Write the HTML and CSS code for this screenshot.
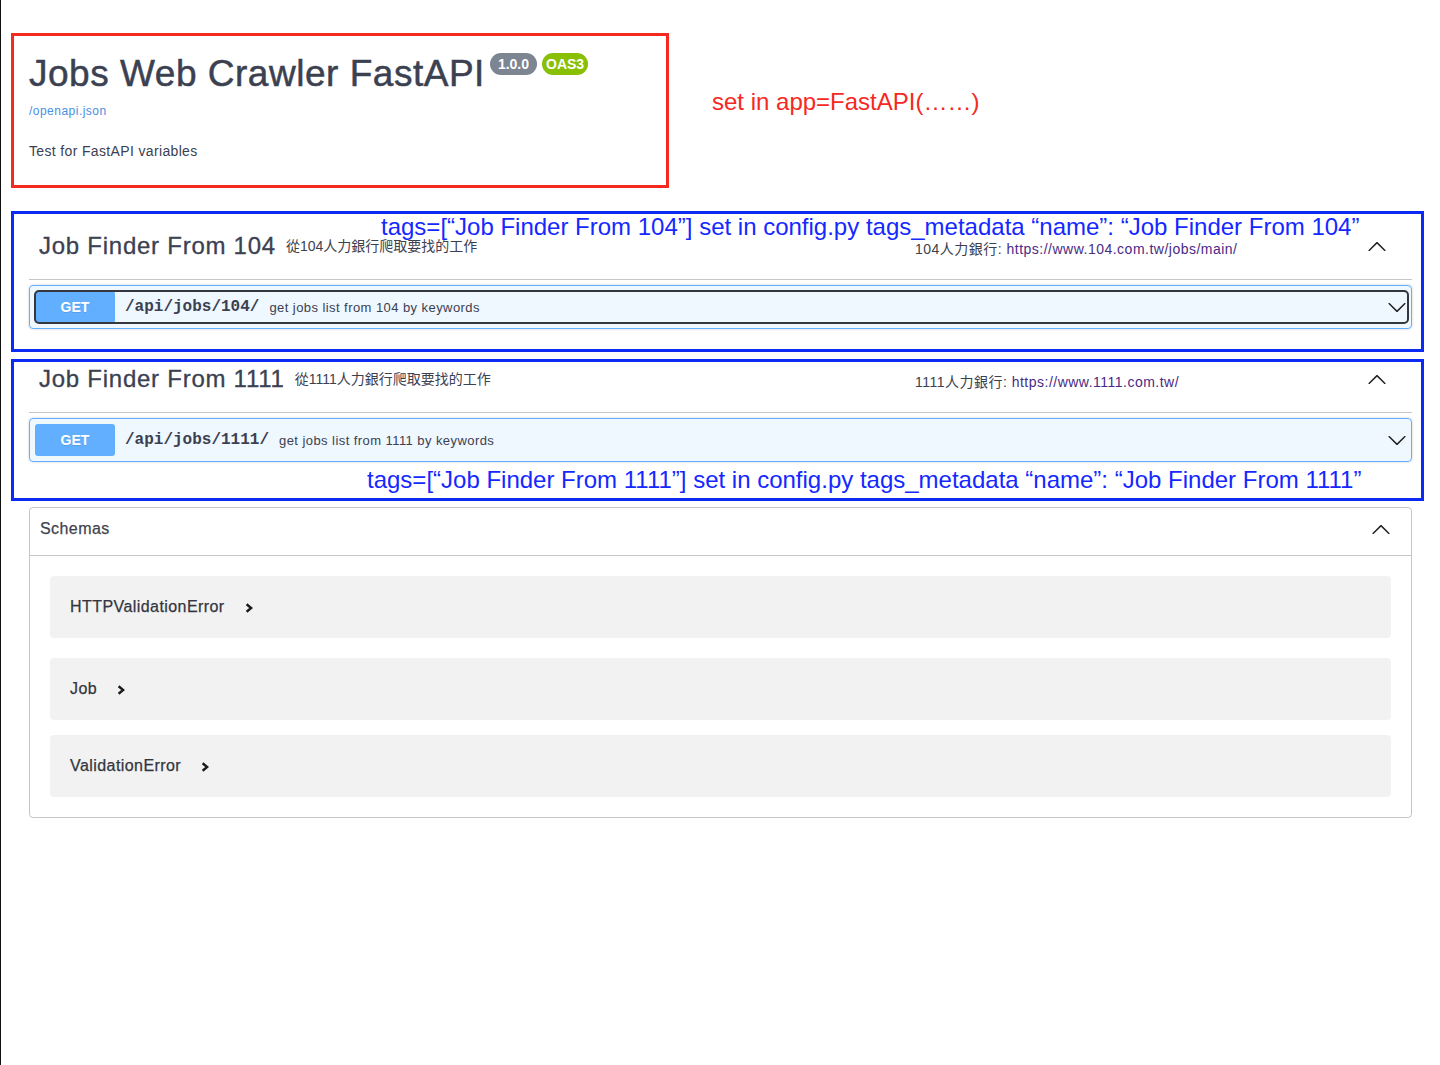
FILE: index.html
```html
<!DOCTYPE html>
<html lang="en">
<head>
<meta charset="utf-8">
<title>Jobs Web Crawler FastAPI</title>
<link rel="stylesheet" href="styles.css">
</head>
<body>
<div class="page">
  <div class="swagger">
    <section class="info">
      <div class="title-row">
        <h2 class="title">Jobs Web Crawler FastAPI</h2>
        <span class="badge badge-version">1.0.0</span>
        <span class="badge badge-oas">OAS3</span>
      </div>
      <a class="spec-link" href="#">/openapi.json</a>
      <p class="info-desc">Test for FastAPI variables</p>
    </section>

    <section class="tag-section">
      <div class="tag-header">
        <span class="tag-name">Job Finder From 104</span>
        <span class="tag-desc">從104人力銀行爬取要找的工作</span>
        <div class="tag-ext">104人力銀行: <a href="#">https://www.104.com.tw/jobs/main/</a></div>
        <svg class="arrow" viewBox="0 0 20 20" width="20" height="20"><path d="M17.418 14.908c.272.268.709.268.979 0s.271-.701 0-.969l-7.908-7.830c-.27-.268-.707-.268-.979 0l-7.908 7.830c-.27.268-.27.701 0 .969.271.268.709.268.979 0L10 7.767l7.418 7.141z"/></svg>
      </div>
      <div class="opblock">
        <div class="summary focused">
          <span class="method">GET</span>
          <span class="path">/api/jobs/104/</span>
          <span class="op-desc">get jobs list from 104 by keywords</span>
          <svg class="arrow arrow-op" viewBox="0 0 20 20" width="20" height="20"><path d="M17.418 6.109c.272-.268.709-.268.979 0s.271.701 0 .969l-7.908 7.83c-.27.268-.707.268-.979 0l-7.908-7.83c-.27-.268-.27-.701 0-.969.271-.268.709-.268.979 0L10 13.25l7.418-7.141z"/></svg>
        </div>
      </div>
    </section>

    <section class="tag-section tag-second">
      <div class="tag-header">
        <span class="tag-name">Job Finder From 1111</span>
        <span class="tag-desc">從1111人力銀行爬取要找的工作</span>
        <div class="tag-ext">1111人力銀行: <a href="#">https://www.1111.com.tw/</a></div>
        <svg class="arrow" viewBox="0 0 20 20" width="20" height="20"><path d="M17.418 14.908c.272.268.709.268.979 0s.271-.701 0-.969l-7.908-7.830c-.27-.268-.707-.268-.979 0l-7.908 7.830c-.27.268-.27.701 0 .969.271.268.709.268.979 0L10 7.767l7.418 7.141z"/></svg>
      </div>
      <div class="opblock">
        <div class="summary">
          <span class="method">GET</span>
          <span class="path">/api/jobs/1111/</span>
          <span class="op-desc">get jobs list from 1111 by keywords</span>
          <svg class="arrow arrow-op" viewBox="0 0 20 20" width="20" height="20"><path d="M17.418 6.109c.272-.268.709-.268.979 0s.271.701 0 .969l-7.908 7.83c-.27.268-.707.268-.979 0l-7.908-7.83c-.27-.268-.27-.701 0-.969.271-.268.709-.268.979 0L10 13.25l7.418-7.141z"/></svg>
        </div>
      </div>
    </section>

    <section class="models">
      <div class="models-header">
        <span class="models-title">Schemas</span>
        <svg class="arrow" viewBox="0 0 20 20" width="20" height="20"><path d="M17.418 14.908c.272.268.709.268.979 0s.271-.701 0-.969l-7.908-7.830c-.27-.268-.707-.268-.979 0l-7.908 7.830c-.27.268-.27.701 0 .969.271.268.709.268.979 0L10 7.767l7.418 7.141z"/></svg>
      </div>
      <div class="models-body">
        <div class="model">
          <span class="model-title">HTTPValidationError</span>
          <svg class="toggle" viewBox="0 0 8 10" width="8" height="10"><polyline points="1.6,1.2 6.2,5 1.6,8.8"/></svg>
        </div>
        <div class="model model-tight">
          <span class="model-title">Job</span>
          <svg class="toggle" viewBox="0 0 8 10" width="8" height="10"><polyline points="1.6,1.2 6.2,5 1.6,8.8"/></svg>
        </div>
        <div class="model model-last">
          <span class="model-title">ValidationError</span>
          <svg class="toggle" viewBox="0 0 8 10" width="8" height="10"><polyline points="1.6,1.2 6.2,5 1.6,8.8"/></svg>
        </div>
      </div>
    </section>
  </div>

  <div class="anno-box anno-red"></div>
  <div class="anno-text anno-text-red">set in app=FastAPI(……)</div>
  <div class="anno-box anno-blue anno-blue1"></div>
  <div class="anno-box anno-blue anno-blue2"></div>
  <div class="anno-text anno-text-blue anno-text-blue1">tags=[“Job Finder From 104”] set in config.py tags_metadata “name”: “Job Finder From 104”</div>
  <div class="anno-text anno-text-blue anno-text-blue2">tags=[“Job Finder From 1111”] set in config.py tags_metadata “name”: “Job Finder From 1111”</div>
</div>
</body>
</html>
```

FILE: styles.css
```css
* {
  box-sizing: border-box;
}

html,
body {
  margin: 0;
  padding: 0;
  background: #fff;
}

body {
  font-family: "Liberation Sans", Arial, "Noto Sans CJK TC", sans-serif;
  color: #3b4151;
}

.page {
  position: relative;
  min-height: 1065px;
  border-left: 1px solid #111;
}

.swagger {
  padding: 52px 28px 40px 28px;
  letter-spacing: 0.027em;
}

/* ---------- info ---------- */
.title-row {
  display: flex;
  align-items: flex-start;
  height: 44px;
}

.title {
  margin: 0;
  font-size: 37px;
  line-height: 44px;
  font-weight: 400;
  letter-spacing: 0.014em;
  color: #3b4151;
  -webkit-text-stroke: 0.5px #3b4151;
}

.badge {
  margin-top: 1px;
  height: 22px;
  line-height: 22px;
  font-size: 14px;
  font-weight: 700;
  color: #fff;
  border-radius: 11px;
  letter-spacing: 0;
}

.badge-version {
  margin-left: 5px;
  padding: 0 8px;
  background: #7d8492;
}

.badge-oas {
  margin-left: 5px;
  padding: 0 4px;
  background: #89bf04;
}

.spec-link {
  display: block;
  margin-top: 7px;
  font-size: 12px;
  line-height: 16px;
  color: #4990e2;
  text-decoration: none;
  letter-spacing: 0.04em;
}

.info-desc {
  margin: 22px 0 0;
  font-size: 14px;
  line-height: 20px;
  letter-spacing: 0.025em;
}

/* ---------- tags ---------- */
.tag-section {
  margin-top: 52px;
}

.tag-second {
  margin-top: 17px;
}

.tag-header {
  display: flex;
  align-items: center;
  height: 67px;
  padding: 0 25px 0 10px;
  border-bottom: 1px solid rgba(59, 65, 81, 0.3);
}

.tag-name {
  font-size: 24px;
  line-height: 30px;
  letter-spacing: 0.031em;
  -webkit-text-stroke: 0.3px #3b4151;
}

.tag-desc {
  flex: 1;
  padding: 0 10px;
  font-size: 14px;
  line-height: 18px;
  letter-spacing: 0;
  font-family: "Liberation Sans", "Noto Sans CJK TC", sans-serif;
}

.tag-ext {
  width: 452px;
  margin-top: 6px;
  font-size: 14px;
  line-height: 18px;
  letter-spacing: 0.035em;
  font-family: "Liberation Sans", "Noto Sans CJK TC", sans-serif;
}

.tag-ext a {
  color: #4a2a86;
  text-decoration: none;
}

.arrow {
  flex: none;
  fill: #1f1f1f;
}

/* ---------- operation block ---------- */
.opblock {
  margin-top: 5px;
  padding: 5px 3px 5px 5px;
  border: 1px solid #61affe;
  border-radius: 4px;
  background: rgba(97, 175, 254, 0.1);
  box-shadow: 0 0 3px rgba(0, 0, 0, 0.19);
}

.summary {
  display: flex;
  align-items: center;
  border-radius: 4px;
}

.summary.focused {
  outline: 2px solid #34373d;
  outline-offset: -1px;
}

.method {
  flex: none;
  width: 80px;
  padding: 6px 0;
  text-align: center;
  font-size: 14px;
  line-height: 20px;
  font-weight: 700;
  color: #fff;
  background: #61affe;
  border-radius: 3px;
  text-shadow: 0 1px 0 rgba(0, 0, 0, 0.1);
  letter-spacing: 0;
}

.path {
  padding: 0 10px;
  font-family: "Liberation Mono", "Courier New", monospace;
  font-size: 16px;
  font-weight: 700;
  letter-spacing: 0;
  color: #3b4151;
}

.op-desc {
  flex: 1;
  font-size: 13px;
  color: #3b4151;
}

.arrow-op {
  margin-right: 1px;
}

/* ---------- schemas ---------- */
.models {
  margin-top: 45px;
  border: 1px solid rgba(59, 65, 81, 0.3);
  border-radius: 4px;
}

.models-header {
  display: flex;
  align-items: center;
  justify-content: space-between;
  padding: 9px 20px 14px 10px;
  border-bottom: 1px solid rgba(59, 65, 81, 0.3);
}

.models-title {
  font-size: 16px;
  line-height: 24px;
  color: #3f434d;
  -webkit-text-stroke: 0.25px #3f434d;
}

.models-body {
  padding: 20px;
}

.model {
  display: flex;
  align-items: center;
  gap: 20px;
  height: 62px;
  margin-bottom: 20px;
  padding: 0 20px;
  border-radius: 4px;
  background: rgba(0, 0, 0, 0.05);
}

.model-tight {
  margin-bottom: 15px;
}

.model-last {
  margin-bottom: 0;
}

.model-title {
  font-size: 16px;
  line-height: 20px;
  color: #333640;
  -webkit-text-stroke: 0.25px #333640;
}

.toggle {
  fill: none;
  stroke: #1a1a1a;
  stroke-width: 2.4;
  margin-top: 2px;
}

/* ---------- annotations (overlay) ---------- */
.anno-box {
  position: absolute;
  border: 3px solid #f5291f;
}

.anno-red {
  left: 10px;
  top: 33px;
  width: 658px;
  height: 155px;
}

.anno-blue {
  border-color: #0b2bf5;
}

.anno-blue1 {
  left: 10px;
  top: 211px;
  width: 1413px;
  height: 141px;
}

.anno-blue2 {
  left: 10px;
  top: 359px;
  width: 1413px;
  height: 142px;
}

.anno-text {
  position: absolute;
  font-family: "Liberation Sans", Arial, sans-serif;
  font-size: 24px;
  line-height: 28px;
  white-space: nowrap;
}

.anno-text-red {
  left: 711px;
  top: 88px;
  color: #f5291f;
}

.anno-text-blue {
  color: #1428ff;
}

.anno-text-blue1 {
  left: 380px;
  top: 213px;
}

.anno-text-blue2 {
  left: 366px;
  top: 466px;
}
```
